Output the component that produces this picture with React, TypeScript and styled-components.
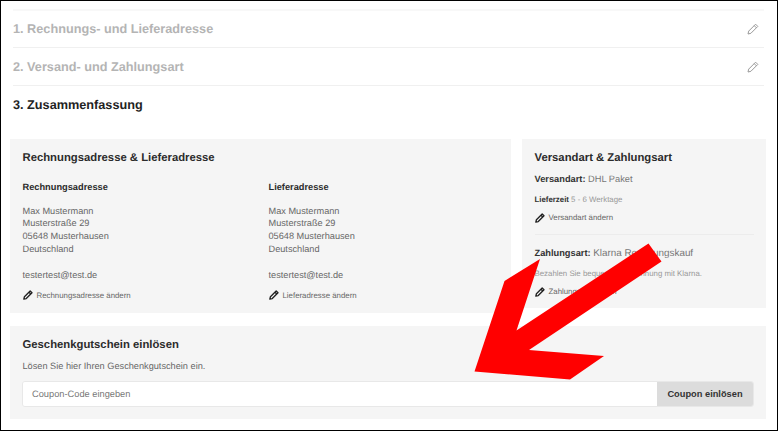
import React from "react";
import styled, { createGlobalStyle } from "styled-components";

const GlobalStyle = createGlobalStyle`
  html, body {
    margin: 0;
    padding: 0;
    background: #fff;
  }

  body {
    font-family: "Liberation Sans", Arial, sans-serif;
    text-rendering: geometricPrecision;
  }
`;

const Page = styled.div`
  position: relative;
  box-sizing: border-box;
  width: 778px;
  height: 431px;
  padding: 8px 11px 0 9px;
  border: 1px solid #000;
  overflow: hidden;
`;

const Steps = styled.div`
  margin: 0 2px 0 3px;
  border-top: 2px solid #f8f8f8;
`;

const Step = styled.div<{ $height: number; $divided?: boolean }>`
  display: flex;
  align-items: center;
  justify-content: space-between;
  box-sizing: border-box;
  height: ${(p) => p.$height}px;
  padding: 0 5px 0 0;
  border-bottom: ${(p) => (p.$divided ? "1px solid #f0f0f0" : "none")};
`;

const StepTitle = styled.h2<{ $active?: boolean }>`
  margin: 0;
  font-size: 12.7px;
  font-weight: 700;
  color: ${(p) => (p.$active ? "#222" : "#b4b4b4")};
`;

const Columns = styled.div`
  display: flex;
  align-items: flex-start;
  gap: 11px;
  margin-top: 16px;
`;

const Card = styled.section`
  box-sizing: border-box;
  background: #f5f5f5;
`;

const AddressCard = styled(Card)`
  display: flex;
  flex-direction: column;
  width: 501px;
  height: 174px;
  padding: 12px 12px 0 12.5px;
`;

const ShippingCard = styled(Card)`
  width: 244px;
  height: 169px;
  padding: 12px 12px 0 12.5px;
`;

const CardTitle = styled.h3`
  margin: 0;
  font-size: 11.3px;
  line-height: 14px;
  font-weight: 700;
  color: #2b2b2b;
`;

const AddressGrid = styled.div`
  display: grid;
  grid-template-columns: 246px 1fr;
  margin-top: 16px;
`;

const AddressLabel = styled.h4`
  margin: 0 0 10.5px;
  font-size: 9.25px;
  line-height: 13px;
  font-weight: 700;
  color: #2b2b2b;
`;

const AddressLines = styled.p`
  margin: 0;
  font-size: 9.2px;
  line-height: 12.8px;
  color: #666;
`;

const Email = styled(AddressLines)`
  margin-top: 13px;
`;

const EditLink = styled.a<{ $top: number }>`
  display: flex;
  align-items: center;
  gap: 4px;
  margin-top: ${(p) => p.$top}px;
  font-size: 7.85px;
  line-height: 11px;
  color: #666;
`;

const Row = styled.p<{ $top: number }>`
  margin: ${(p) => p.$top}px 0 0;
  font-size: 9.27px;
  line-height: 13px;
  color: #777;

  b {
    color: #333;
  }
`;

const PaymentName = styled.span`
  font-size: 9.9px;
`;

const SmallRow = styled.p<{ $top: number }>`
  margin: ${(p) => p.$top}px 0 0;
  font-size: 7.85px;
  line-height: 11px;
  color: #999;

  b {
    color: #333;
  }
`;

const Divider = styled.hr`
  margin: 11px 0 0;
  border: none;
  border-top: 1px solid #ececec;
`;

const CouponCard = styled(Card)`
  width: 756px;
  height: 93px;
  margin-top: 13px;
  padding: 12px 12px 0 12.5px;
`;

const CouponText = styled.p`
  margin: 8px 0 0;
  font-size: 9.2px;
  line-height: 13px;
  color: #666;
`;

const CouponForm = styled.div`
  display: flex;
  box-sizing: border-box;
  height: 26px;
  margin: 8px 0 0 -0.5px;
  border: 1px solid #e8e8e8;
  border-radius: 3px;
  overflow: hidden;
`;

const CouponInput = styled.div`
  flex: 1;
  padding-left: 9px;
  background: #fff;
  font-size: 9.27px;
  line-height: 24px;
  color: #777;
`;

const CouponButton = styled.button`
  width: 96px;
  padding: 0;
  border: none;
  background: #dcdcdc;
  font-family: inherit;
  font-size: 9.27px;
  font-weight: 700;
  color: #333;
`;

const ArrowOverlay = styled.svg`
  position: absolute;
  left: -1px;
  top: -1px;
  width: 778px;
  height: 431px;
  pointer-events: none;
`;

const Pencil = ({ size = 10, color = "#222", weight = 1.6 }: { size?: number; color?: string; weight?: number }) => (
  <svg width={size} height={size} viewBox="0 0 12 12" fill="none" stroke={color} strokeWidth={weight} strokeLinejoin="round">
    <path d="M8.6 1.2 10.8 3.4 3.9 10.3 1 11 1.7 8.1Z" />
    <path d="M7.2 2.6 9.4 4.8" />
  </svg>
);

const addressLines = (
  <>
    Max Mustermann
    <br />
    Musterstraße 29
    <br />
    05648 Musterhausen
    <br />
    Deutschland
  </>
);

const App = () => (
  <Page>
    <GlobalStyle />
    <Steps>
      <Step $height={37} $divided>
        <StepTitle>1. Rechnungs- und Lieferadresse</StepTitle>
        <Pencil size={12} color="#999" weight={1} />
      </Step>
      <Step $height={38} $divided>
        <StepTitle>2. Versand- und Zahlungsart</StepTitle>
        <Pencil size={12} color="#999" weight={1} />
      </Step>
      <Step $height={37}>
        <StepTitle $active>3. Zusammenfassung</StepTitle>
      </Step>
    </Steps>
    <Columns>
      <AddressCard>
        <CardTitle>Rechnungsadresse &amp; Lieferadresse</CardTitle>
        <AddressGrid>
          <div>
            <AddressLabel>Rechnungsadresse</AddressLabel>
            <AddressLines>{addressLines}</AddressLines>
            <Email>testertest@test.de</Email>
            <EditLink $top={8.5}>
              <Pencil />
              Rechnungsadresse ändern
            </EditLink>
          </div>
          <div>
            <AddressLabel>Lieferadresse</AddressLabel>
            <AddressLines>{addressLines}</AddressLines>
            <Email>testertest@test.de</Email>
            <EditLink $top={8.5}>
              <Pencil />
              Lieferadresse ändern
            </EditLink>
          </div>
        </AddressGrid>
      </AddressCard>
      <ShippingCard>
        <CardTitle>Versandart &amp; Zahlungsart</CardTitle>
        <Row $top={8}>
          <b>Versandart:</b> DHL Paket
        </Row>
        <SmallRow $top={8}>
          <b>Lieferzeit</b> 5 - 6 Werktage
        </SmallRow>
        <EditLink $top={7}>
          <Pencil />
          Versandart ändern
        </EditLink>
        <Divider />
        <Row $top={12}>
          <b>Zahlungsart:</b> <PaymentName>Klarna Rechnungskauf</PaymentName>
        </Row>
        <SmallRow $top={8}>Bezahlen Sie bequem auf Rechnung mit Klarna.</SmallRow>
        <EditLink $top={7}>
          <Pencil />
          Zahlungsart ändern
        </EditLink>
      </ShippingCard>
    </Columns>
    <CouponCard>
      <CardTitle>Geschenkgutschein einlösen</CardTitle>
      <CouponText>Lösen Sie hier Ihren Geschenkgutschein ein.</CouponText>
      <CouponForm>
        <CouponInput>Coupon-Code eingeben</CouponInput>
        <CouponButton>Coupon einlösen</CouponButton>
      </CouponForm>
    </CouponCard>
    <ArrowOverlay viewBox="0 0 778 431">
      <polygon
        fill="#ff0000"
        points="648.5,243.5 661.5,261.5 529,350 604,356 570,379.5 474.5,371.5 504.5,281 540,259 516.5,330.5"
      />
    </ArrowOverlay>
  </Page>
);

export default App;
